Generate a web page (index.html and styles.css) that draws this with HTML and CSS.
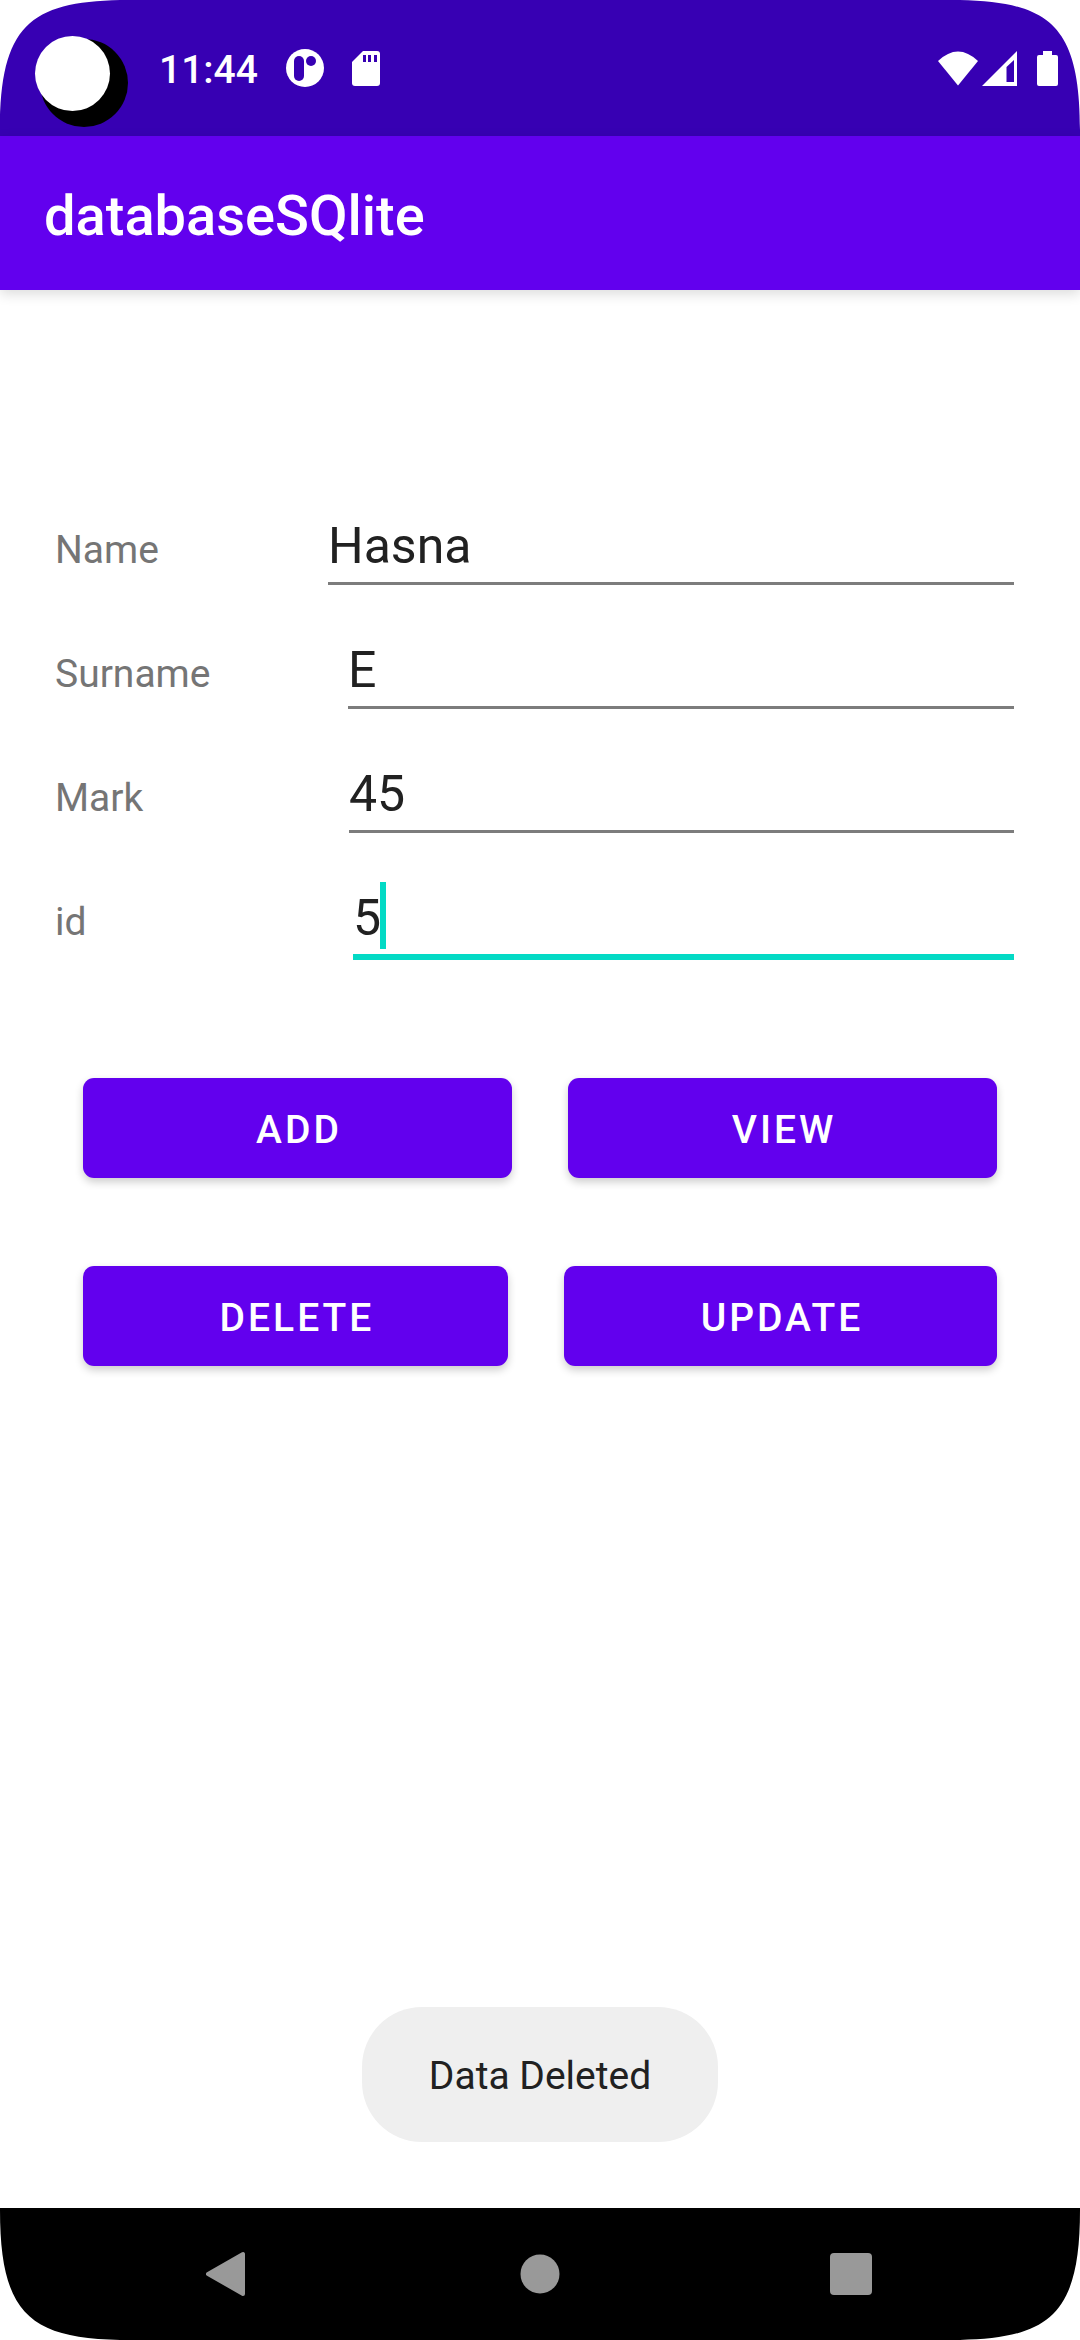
FILE: index.html
```html
<!DOCTYPE html>
<html lang="en">
<head>
<meta charset="utf-8">
<meta name="viewport" content="width=device-width, initial-scale=1">
<title>databaseSQlite</title>
<link rel="stylesheet" href="styles.css">
</head>
<body>
<div class="screen">
  <header class="status-bar">
    <div class="camera" aria-hidden="true"></div>
    <time class="clock">11:44</time>
    <svg class="icon-app" width="38" height="38" viewBox="0 0 38 38" aria-hidden="true">
      <circle cx="19" cy="19" r="19" fill="#fff"/>
      <rect x="8" y="7" width="10" height="25" rx="5" fill="#3700b3"/>
      <circle cx="25" cy="12" r="5" fill="#3700b3"/>
    </svg>
    <svg class="icon-sd" width="28" height="35" viewBox="0 0 28 35" aria-hidden="true">
      <path d="M11 0H25a3 3 0 0 1 3 3V32a3 3 0 0 1-3 3H3a3 3 0 0 1-3-3V11z" fill="#fff"/>
      <path d="M11 4h3v7h-3zM16 4h3v7h-3zM22 4h3v7h-3z" fill="#3700b3"/>
    </svg>
    <div class="signals" aria-hidden="true">
      <svg width="42" height="35" viewBox="0 0 42 35"><path d="M1 10Q21 -9 41 10L21 34.500z" fill="#fff"/></svg>
      <svg width="35" height="35" viewBox="0 0 35 35"><path fill-rule="evenodd" d="M35 0V35H0zM32 9L24.500 16V31H32z" fill="#fff"/></svg>
      <svg class="icon-battery" width="21" height="35" viewBox="0 0 21 35"><path d="M6 0h9v4h4a2 2 0 0 1 2 2V33a2 2 0 0 1-2 2H2a2 2 0 0 1-2-2V6a2 2 0 0 1 2-2h4z" fill="#fff"/></svg>
    </div>
  </header>

  <div class="app-bar"><h1 class="title">databaseSQlite</h1></div>

  <main class="content">
    <form class="form">
      <div class="row row-name">
        <label class="label" for="name">Name</label>
        <input class="input" id="name" type="text" value="Hasna">
      </div>
      <div class="row row-surname">
        <label class="label" for="surname">Surname</label>
        <input class="input" id="surname" type="text" value="E">
      </div>
      <div class="row row-mark">
        <label class="label" for="mark">Mark</label>
        <input class="input" id="mark" type="text" value="45">
      </div>
      <div class="row row-id">
        <label class="label" for="id">id</label>
        <div class="field">
          <input class="input input-active" id="id" type="text" value="5">
          <span class="caret" aria-hidden="true"></span>
        </div>
      </div>
      <div class="buttons buttons-top">
        <button class="button" type="button">ADD</button>
        <button class="button" type="button">VIEW</button>
      </div>
      <div class="buttons buttons-bottom">
        <button class="button" type="button">DELETE</button>
        <button class="button" type="button">UPDATE</button>
      </div>
    </form>
    <div class="toast" role="status">Data Deleted</div>
  </main>

  <nav class="nav-bar">
    <button class="nav-button" type="button" aria-label="Back">
      <svg width="46" height="46" viewBox="0 0 46 46"><path d="M37 3V43L2 23z" fill="#999" stroke="#999" stroke-width="4" stroke-linejoin="round"/></svg>
    </button>
    <button class="nav-button" type="button" aria-label="Home">
      <svg width="46" height="46" viewBox="0 0 46 46"><circle cx="23" cy="23" r="19.500" fill="#999"/></svg>
    </button>
    <button class="nav-button" type="button" aria-label="Recent apps">
      <svg width="46" height="46" viewBox="0 0 46 46"><rect x="2" y="2" width="42" height="42" rx="4" fill="#999"/></svg>
    </button>
  </nav>

  <svg class="corner corner-tl" viewBox="0 0 120 130" aria-hidden="true"><path d="M0 0H120C30 2 0 26 0 130z" fill="#fff"/></svg>
  <svg class="corner corner-tr" viewBox="0 0 120 130" aria-hidden="true"><path d="M0 0H120C30 2 0 26 0 130z" fill="#fff"/></svg>
  <svg class="corner corner-bl" viewBox="0 0 120 130" aria-hidden="true"><path d="M0 0H120C30 2 0 26 0 130z" fill="#fff"/></svg>
  <svg class="corner corner-br" viewBox="0 0 120 130" aria-hidden="true"><path d="M0 0H120C30 2 0 26 0 130z" fill="#fff"/></svg>
</div>
</body>
</html>
```
FILE: styles.css
```css
* {
  box-sizing: border-box;
}

body {
  margin: 0;
  background: #fff;
  font-family: Roboto, "Noto Sans", sans-serif;
  color: #212121;
}

.screen {
  position: relative;
  display: flex;
  flex-direction: column;
  min-height: 100vh;
}

/* Status bar */
.status-bar {
  display: flex;
  align-items: center;
  height: 136px;
  padding: 0 22px 0 35px;
  background: #3700b3;
  color: #fff;
}

/* Camera cut-out with its offset ring */
.camera {
  position: relative;
  width: 88px;
  height: 88px;
  margin: 30px 0 0 5px;
  border-radius: 50%;
  background: #000;
}

.camera::before {
  content: "";
  position: absolute;
  top: -3px;
  left: -5px;
  width: 75px;
  height: 75px;
  border-radius: 50%;
  background: #fff;
}

.clock {
  padding-top: 4px;
  margin-left: 31px;
  font-size: 39px;
  font-weight: 500;
  line-height: 46px;
}

.icon-app {
  margin-left: 28px;
}

.icon-sd {
  margin-left: 28px;
}

.signals {
  display: flex;
  align-items: center;
  gap: 3px;
  margin-left: auto;
}

.icon-battery {
  margin-left: 17px;
}

/* App bar */
.app-bar {
  display: flex;
  align-items: center;
  height: 154px;
  padding: 6px 44px 0;
  background: #6200ee;
  box-shadow: 0 4px 12px rgba(0, 0, 0, 0.14);
}

.title {
  margin: 0;
  color: #fff;
  font-size: 56px;
  font-weight: 500;
  line-height: 64px;
}

/* Form */
.content {
  display: flex;
  flex: 1;
  flex-direction: column;
  justify-content: space-between;
  align-items: center;
  padding: 212px 0 66px;
}

.form {
  width: 100%;
}

.row {
  display: flex;
  align-items: baseline;
  height: 124px;
  padding: 0 66px 0 55px;
}

.label {
  flex: none;
  color: #757575;
  font-size: 39px;
  line-height: 52px;
}

.row-name .label {
  width: 273px;
}

.row-surname .label {
  width: 293px;
}

.row-mark .label {
  width: 294px;
}

.row-id .label {
  width: 298px;
}

.field {
  position: relative;
  display: flex;
  flex: 1;
}

.input {
  flex: 1;
  min-width: 0;
  height: 83px;
  padding: 16px 0 8px;
  border: 0;
  border-bottom: 3px solid #7c7c7c;
  border-radius: 0;
  outline: 0;
  background: transparent;
  color: #212121;
  font-family: inherit;
  font-size: 50px;
}

.input-active {
  height: 86px;
  border-bottom: 6px solid #03dac5;
}

.caret {
  position: absolute;
  top: 8px;
  left: 27px;
  width: 6px;
  height: 67px;
  background: #03dac5;
}

/* Buttons */
.buttons {
  display: grid;
  gap: 56px;
  padding: 0 83px;
}

.buttons-top {
  grid-template-columns: 429fr 429fr;
  margin-top: 80px;
}

.buttons-bottom {
  grid-template-columns: 425fr 433fr;
  margin-top: 88px;
}

.button {
  height: 100px;
  padding: 4px 0 0 3px;
  border: 0;
  border-radius: 11px;
  background: #6200ee;
  box-shadow: 0 4px 8px rgba(0, 0, 0, 0.2);
  color: #fff;
  font-family: inherit;
  font-size: 39px;
  font-weight: 500;
  letter-spacing: 3px;
}

/* Toast */
.toast {
  padding: 44px 67px 40px;
  border-radius: 60px;
  background: #efefef;
  font-size: 39px;
  line-height: 51px;
}

/* Navigation bar */
.nav-bar {
  display: flex;
  justify-content: space-between;
  align-items: center;
  height: 132px;
  padding: 0 185px;
  background: #000;
}

.nav-button {
  display: flex;
  padding: 21px;
  border: 0;
  background: transparent;
}

/* Rounded display corners */
.corner {
  position: absolute;
  width: 120px;
  height: 130px;
}

.corner-tl {
  top: 0;
  left: 0;
}

.corner-tr {
  top: 0;
  right: 0;
  transform: scaleX(-1);
}

.corner-bl {
  bottom: 0;
  left: 0;
  transform: scaleY(-1);
}

.corner-br {
  right: 0;
  bottom: 0;
  transform: scale(-1);
}
```
